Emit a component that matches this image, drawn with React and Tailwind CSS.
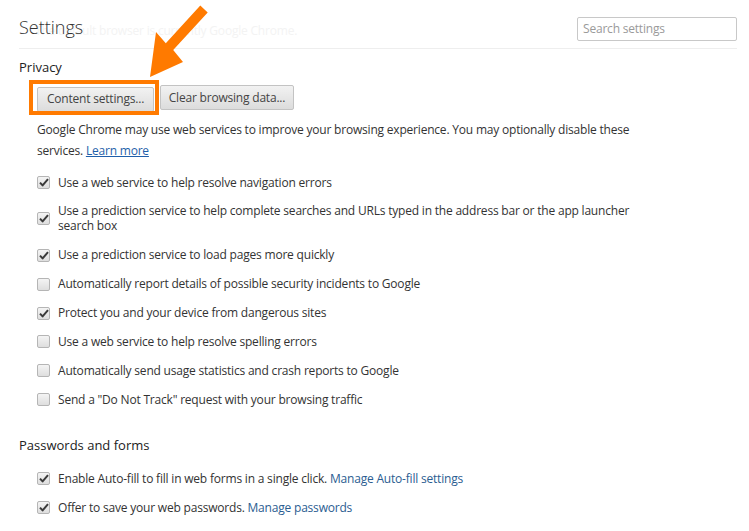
const FONT = { fontFamily: '"Open Sans", "Noto Sans", sans-serif' };

const Check = ({ checked }) => (
  <span className="mt-px flex h-[13px] w-[13px] shrink-0 items-center justify-center rounded-[2px] border border-[#b5b5b5] bg-gradient-to-b from-[#f4f4f4] to-[#dedede]">
    {checked && (
      <svg width="10" height="9" viewBox="0 0 10 9">
        <path d="M1 4.6 L3.6 7.4 L9 1.2" fill="none" stroke="#3a3a3a" strokeWidth="2" strokeLinejoin="round" />
      </svg>
    )}
  </span>
);

const Option = ({ checked, children }) => (
  <label className="flex items-center gap-[8px] text-[12px] leading-[15px] tracking-[-0.2px] text-[#333]">
    <Check checked={checked} />
    <span className="max-w-[585px]">{children}</span>
  </label>
);

const Button = ({ children, width }) => (
  <button type="button" className={`h-[25px] ${width} rounded-[2px] border border-[#c3c3c3] bg-gradient-to-b from-[#f2f2f2] to-[#dcdcdc] text-[12px] tracking-[-0.2px] text-[#444]`}>
    {children}
  </button>
);

const privacyOptions = [
  [true, 'Use a web service to help resolve navigation errors'],
  [true, 'Use a prediction service to help complete searches and URLs typed in the address bar or the app launcher search box'],
  [true, 'Use a prediction service to load pages more quickly'],
  [false, 'Automatically report details of possible security incidents to Google'],
  [true, 'Protect you and your device from dangerous sites'],
  [false, 'Use a web service to help resolve spelling errors'],
  [false, 'Automatically send usage statistics and crash reports to Google'],
  [false, 'Send a "Do Not Track" request with your browsing traffic'],
];

export default function App() {
  return (
    <div className="relative h-[531px] w-[749px] overflow-hidden bg-white" style={FONT}>
      {/* header */}
      <div className="relative ml-[19px] mr-[12px] flex h-[49px] items-start justify-between border-b border-[#eeeeee] pt-[15px]">
        <span className="absolute left-[16px] top-[22px] text-[12px] tracking-[-0.2px] text-[#f3f3f3]">The default browser is currently Google Chrome.</span>
        <h1 className="relative text-[18px] font-light leading-[24px] text-[#333]">Settings</h1>
        <div className="mt-[2px] flex h-[24px] w-[160px] items-center rounded-[2px] border border-[#c8c8c8] px-[5px] text-[12px] tracking-[-0.2px] text-[#9a9a9a]">
          Search settings
        </div>
      </div>

      {/* privacy */}
      <div className="ml-[19px]">
        <h2 className="mt-[9px] text-[13px] leading-[18px] text-[#222]">Privacy</h2>
        <div className="ml-[18px]">
          <div className="mt-[9px] flex gap-[6px]">
            <div className="relative">
              <Button width="w-[117px]">Content settings...</Button>
              <div className="absolute -left-[8px] -top-[5px] h-[35px] w-[130px] border-4 border-[#ff7a00]" />
            </div>
            <Button width="w-[134px]">Clear browsing data...</Button>
          </div>
          <p className="mt-[7px] max-w-[605px] text-[12px] leading-[21px] tracking-[-0.2px] text-[#333]">
            Google Chrome may use web services to improve your browsing experience. You may optionally disable these services.{' '}
            <a className="text-[#1f5faa] underline">Learn more</a>
          </p>
          <div className="mt-[14px] flex flex-col gap-[13.9px]">
            {privacyOptions.map(([checked, text]) => (
              <Option key={text} checked={checked}>{text}</Option>
            ))}
          </div>
        </div>

        <h2 className="mt-[29px] text-[13px] leading-[18px] text-[#222]">Passwords and forms</h2>
        <div className="ml-[18px] mt-[17px] flex flex-col gap-[14px]">
          <Option checked>
            Enable Auto-fill to fill in web forms in a single click. <a className="text-[#2b5d91]">Manage Auto-fill settings</a>
          </Option>
          <Option checked>
            Offer to save your web passwords. <a className="text-[#2b5d91]">Manage passwords</a>
          </Option>
        </div>
      </div>

      {/* annotation arrow */}
      <svg className="pointer-events-none absolute left-0 top-0" width="749" height="531">
        <polygon
          points="150,77 156,32 165.8,43.3 200.3,5.6 207.7,12.4 173.2,50.1 183,62"
          fill="#ff7a00"
        />
      </svg>
    </div>
  );
}
